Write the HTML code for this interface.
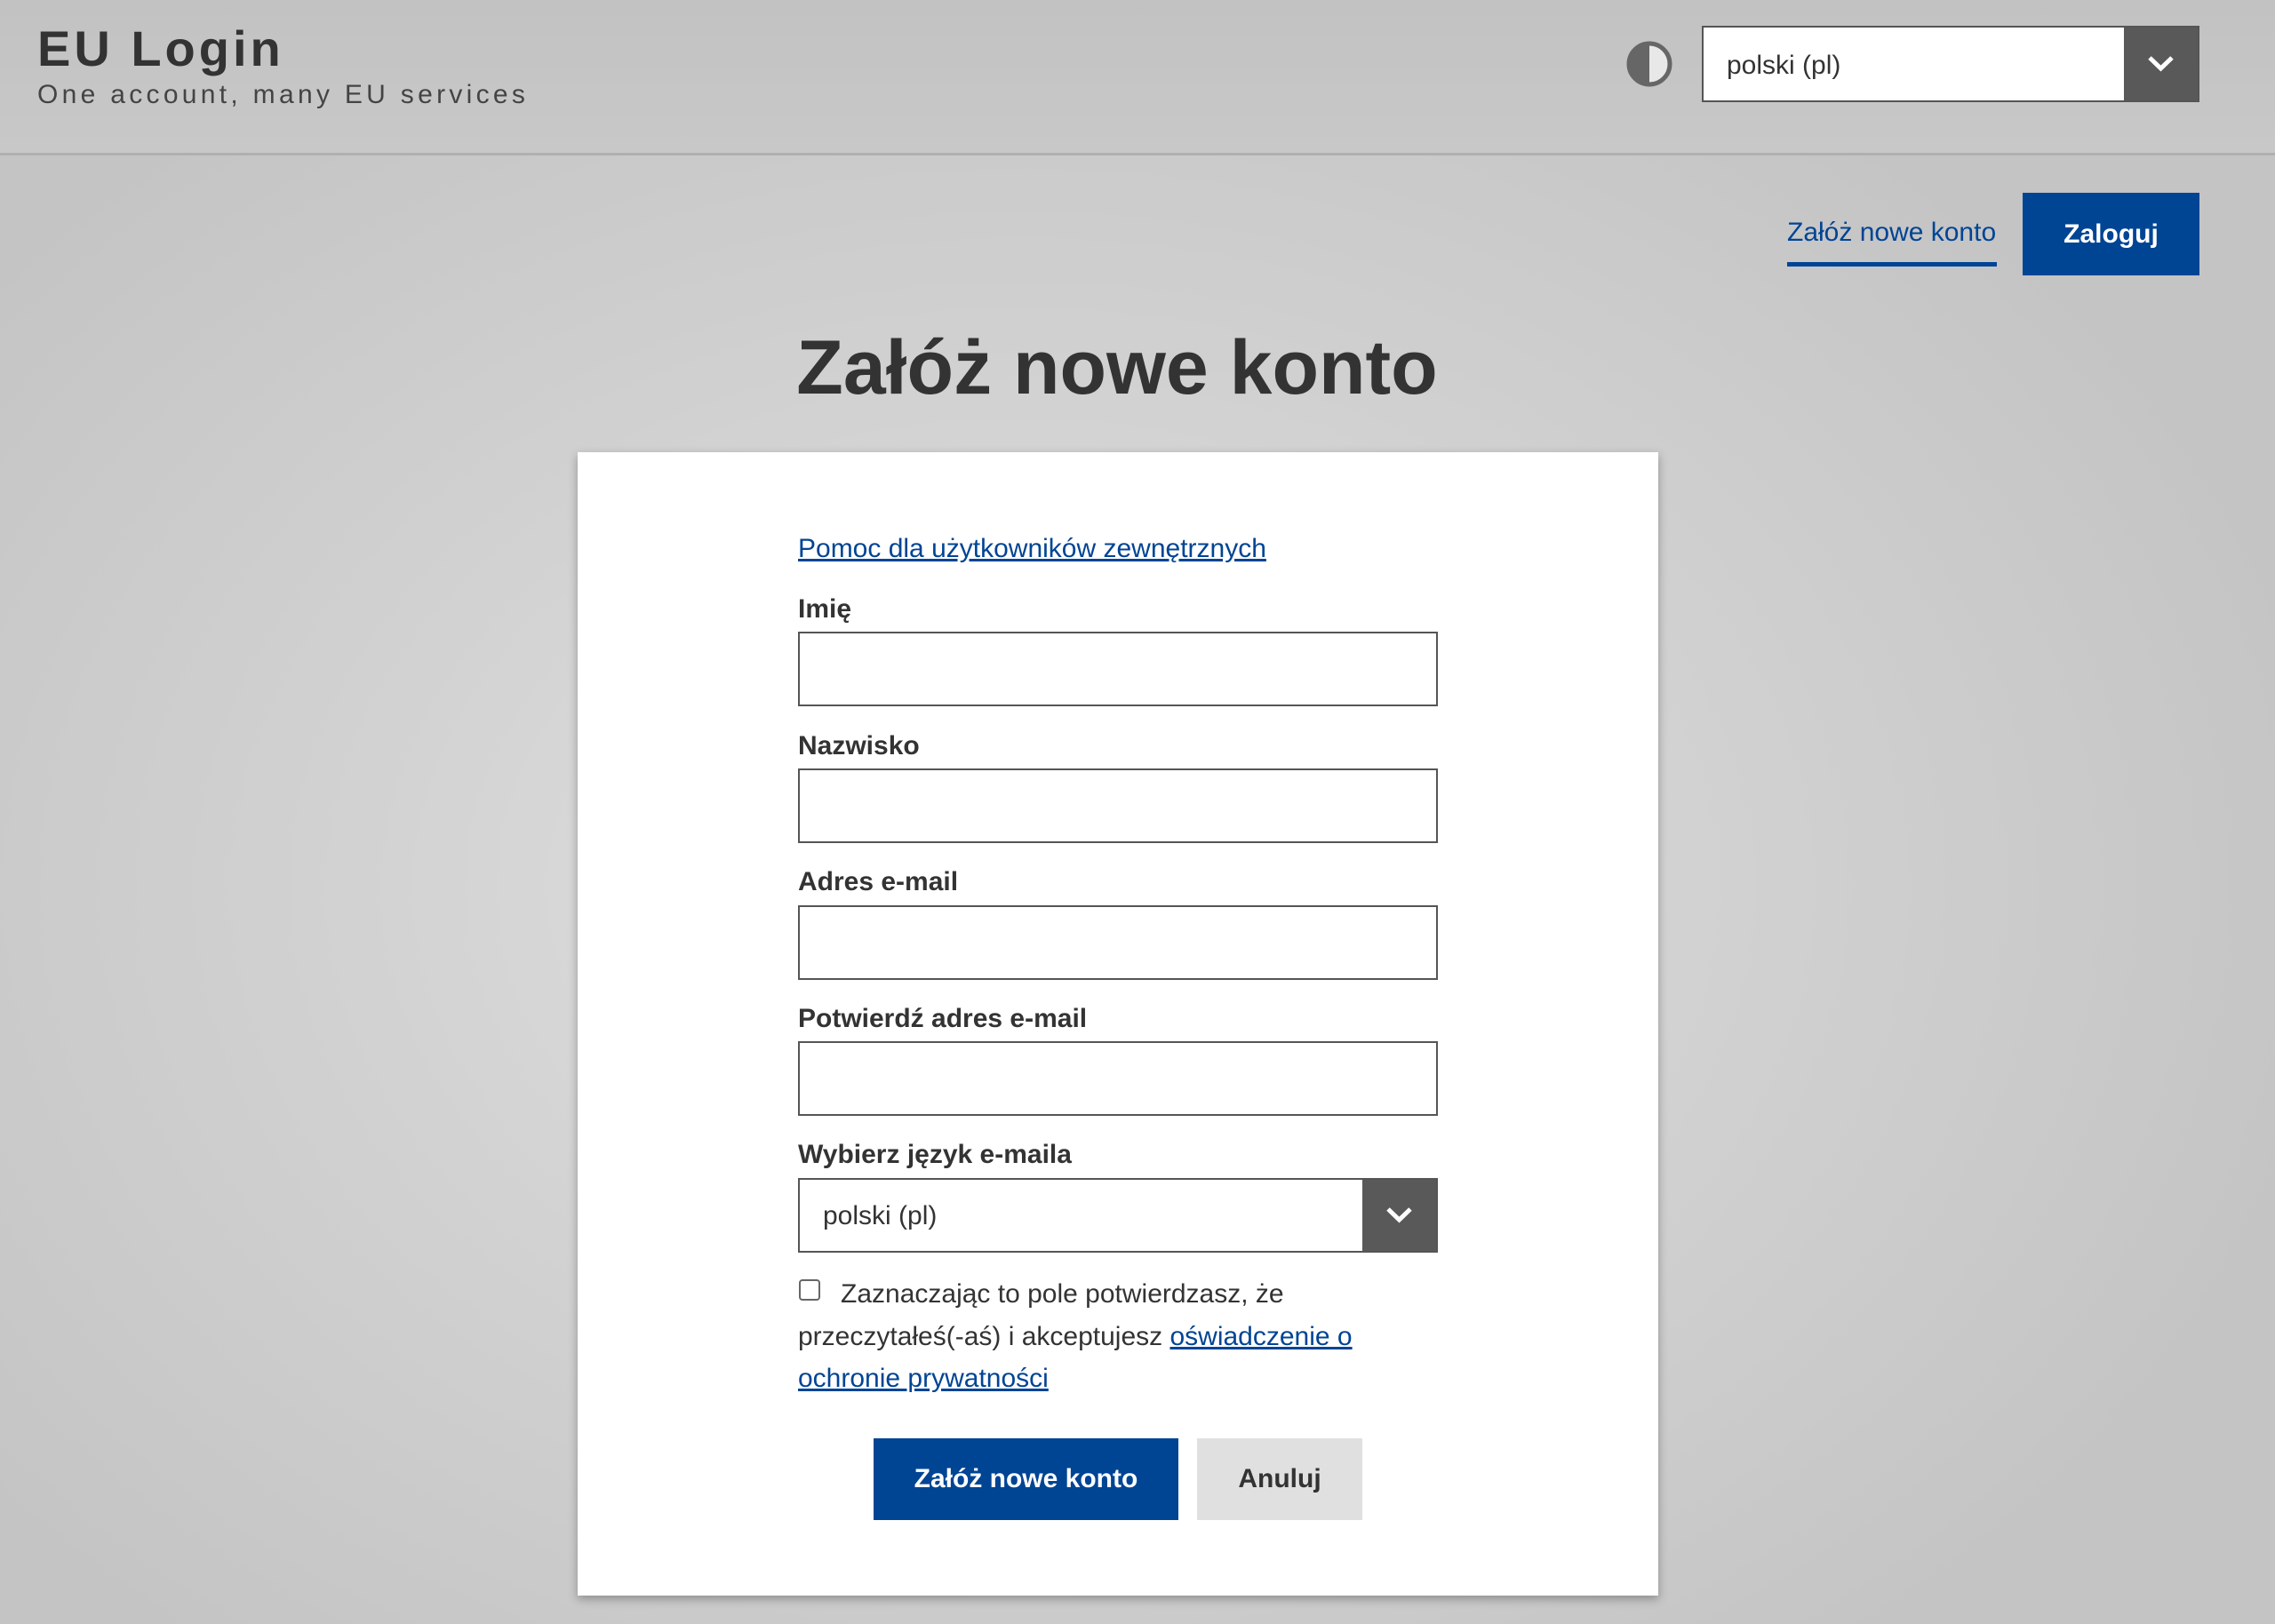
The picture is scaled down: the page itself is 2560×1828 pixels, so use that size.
<!DOCTYPE html>
<html><head><meta charset="utf-8"><style>
*{box-sizing:border-box;margin:0;padding:0}
html,body{width:2560px;height:1828px;overflow:hidden}
body{font-family:"Liberation Sans",Arial,sans-serif;color:#333;background:radial-gradient(ellipse 1500px 1100px at 1150px 1000px,#e2e2e2 0%,#d2d2d2 50%,#c4c4c4 100%);position:relative}
.hdr{position:absolute;left:0;top:0;width:2560px;height:175px;background:linear-gradient(#c2c2c2,#c8c8c8);border-bottom:3px solid #b0b0b0}
.a{position:absolute}
.logo{left:42px;top:22px;font-size:56px;font-weight:bold;letter-spacing:4px;color:#333}
.tag{left:42px;top:90px;font-size:30px;letter-spacing:4.3px;color:#444}
.sel{border:2px solid #555;background:#fff;font-size:30px;color:#333}
.sel .arr{position:absolute;right:0;top:0;bottom:0;background:#595959}
.lbl{left:898px;font-size:30px;font-weight:bold;color:#333}
.inp{left:898px;width:720px;height:84px;border:2px solid #555;background:#fff}
a{color:#004494}
</style></head><body>
<div class="hdr"></div>
<div class="a logo">EU Login</div>
<div class="a tag">One account, many EU services</div>
<svg class="a" style="left:1829px;top:45px" width="54" height="54" viewBox="0 0 54 54"><circle cx="27" cy="27" r="23" fill="#e8e8e8" stroke="#666" stroke-width="5"/><path d="M27 4 A23 23 0 0 0 27 50 Z" fill="#666"/></svg>
<div class="a sel" style="left:1915px;top:29px;width:560px;height:86px">
<span class="a" style="left:26px;top:26px">polski (pl)</span>
<div class="arr" style="width:83px"><svg width="83" height="82" viewBox="0 0 83 82"><path d="M29 34 L41.5 46 L54 34" fill="none" stroke="#fff" stroke-width="5"/></svg></div></div>
<a class="a" style="left:2011px;top:245px;font-size:30px;text-decoration:none;color:#004494">Załóż nowe konto</a>
<div class="a" style="left:2011px;top:295px;width:236px;height:5px;background:#004494"></div>
<div class="a" style="left:2276px;top:217px;width:199px;height:93px;background:#004494;color:#fff;font-size:30px;font-weight:bold;text-align:center;line-height:93px">Zaloguj</div>
<div class="a" style="left:0;width:2514px;top:365px;text-align:center;font-size:86px;font-weight:bold;color:#333">Załóż nowe konto</div>
<div class="a" style="left:650px;top:509px;width:1216px;height:1287px;background:#fff;box-shadow:0 4px 10px rgba(0,0,0,.3)"></div>
<a href="#" class="a" style="left:898px;top:601px;font-size:30px">Pomoc dla użytkowników zewnętrznych</a>
<div class="a lbl" style="top:669px">Imię</div><div class="a inp" style="top:711px"></div>
<div class="a lbl" style="top:823px">Nazwisko</div><div class="a inp" style="top:865px"></div>
<div class="a lbl" style="top:976px">Adres e-mail</div><div class="a inp" style="top:1019px"></div>
<div class="a lbl" style="top:1130px">Potwierdź adres e-mail</div><div class="a inp" style="top:1172px"></div>
<div class="a lbl" style="top:1283px">Wybierz język e-maila</div>
<div class="a sel" style="left:898px;top:1326px;width:720px;height:84px">
<span class="a" style="left:26px;top:24px">polski (pl)</span>
<div class="arr" style="width:83px"><svg width="83" height="80" viewBox="0 0 83 80"><path d="M29 33 L41.5 45 L54 33" fill="none" stroke="#fff" stroke-width="5"/></svg></div></div>
<div class="a" style="left:899px;top:1440px;width:24px;height:24px;border:2px solid #666;border-radius:4px;background:#fff"></div>
<div class="a" style="left:898px;top:1433px;width:740px;font-size:30px;line-height:47.5px;color:#333;text-indent:48px">Zaznaczając to pole potwierdzasz, że przeczytałeś(-aś) i akceptujesz <a href="#">oświadczenie o ochronie prywatności</a></div>
<div class="a" style="left:983px;top:1619px;width:343px;height:92px;background:#004494;color:#fff;font-size:30px;font-weight:bold;text-align:center;line-height:92px">Załóż nowe konto</div>
<div class="a" style="left:1347px;top:1619px;width:186px;height:92px;background:#e0e0e0;color:#333;font-size:30px;font-weight:bold;text-align:center;line-height:92px">Anuluj</div>
</body></html>
